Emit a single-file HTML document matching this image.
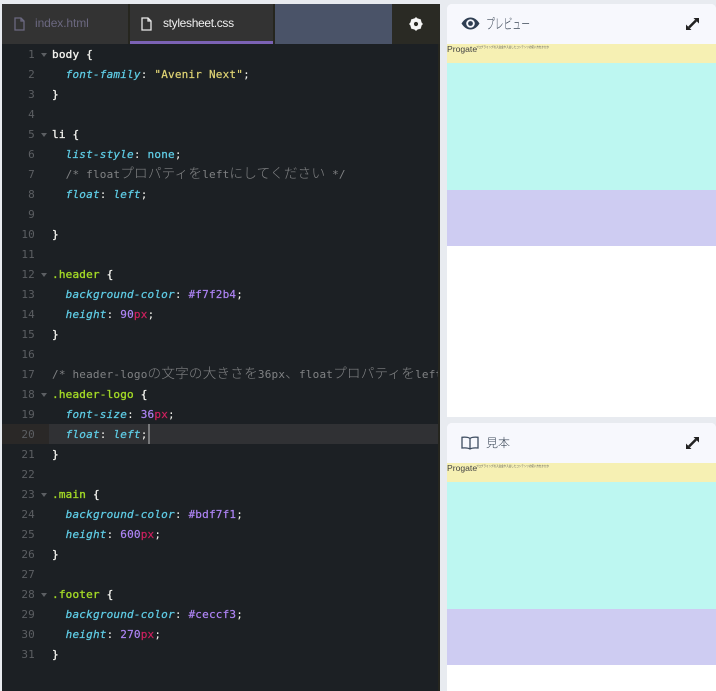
<!DOCTYPE html>
<html lang="ja"><head><meta charset="utf-8"><style>
html,body{margin:0;padding:0;width:716px;height:691px;overflow:hidden;background:#e8ebf0}
*{box-sizing:border-box}
.abs,.l,.n,.f{position:absolute}
#ed{left:2px;top:4px;width:438px;height:687px;background:#1c2024;position:absolute;overflow:hidden}
#edge{position:absolute;left:438px;top:44px;width:2px;height:647px;background:#26261f}
.tab{position:absolute;top:4px;height:40px;background:#333333;font:12px/38px "Liberation Sans",sans-serif}
#code{position:absolute;left:0;top:1px;width:438px;height:690px;overflow:hidden;font:11px/20px "DejaVu Sans Mono","Liberation Mono",monospace;color:#f4f4ef;letter-spacing:.2px}
.l{left:52px;white-space:pre;height:20px;font-weight:normal}
.n{left:2px;width:33px;text-align:right;color:#5c5f63;height:20px;font-weight:normal}
.f{left:41px;width:0;height:0;margin-top:-1px;border-left:3px solid transparent;border-right:3px solid transparent;border-top:4px solid #5c5f63}
.s{font-weight:normal;color:#f2f2ee;-webkit-text-stroke:.35px #f2f2ee}
.p{font-style:italic;color:#5fcde6;-webkit-text-stroke:.25px #5fcde6}
.v{color:#5fcde6;-webkit-text-stroke:.25px #5fcde6}
.q{color:#e0d474;-webkit-text-stroke:.2px #e0d474}
.c{color:#808284}
.g{color:#a3d926;-webkit-text-stroke:.35px #a3d926}
.h{color:#ae84f5;-webkit-text-stroke:.2px #ae84f5}
.x{color:#d0205f;-webkit-text-stroke:.2px #d0205f}
.j{font-family:"Noto Sans CJK JP",sans-serif;font-size:13.6px;font-weight:300;line-height:0}
.panel{position:absolute;left:447px;width:269px;background:#fff;overflow:hidden;border-radius:5px 5px 0 0}
.hd{position:absolute;left:0;top:0;width:269px;height:40px;background:#f7f8fd;color:#3a4656;font:12px/40px "Noto Sans CJK JP",sans-serif}
.y,.t,.u{position:absolute;left:0;width:269px}
.y{top:40px;height:19px;background:#f6f0b3;color:#444;overflow:hidden}
.t{top:59px;height:127px;background:#bdf7f1}
.u{top:186px;height:56px;background:#ceccf2}
.pg{position:absolute;left:0;top:0;font:8.6px/11px "Liberation Sans",sans-serif}
</style></head><body>
<div id="ed"></div>
<div class="tab" style="left:2px;width:126px;color:#6b6880"><span style="position:absolute;left:33px;letter-spacing:-.1px">index.html</span>
<svg style="position:absolute;left:11px;top:13px" width="13" height="14" viewBox="0 0 13 14" fill="none" stroke="#6b6880" stroke-width="1.3"><path d="M2 1h6l3 3v9H2zM8 1v3h3"/></svg></div>
<div class="tab" style="left:128px;width:2px;background:#26261f"></div>
<div class="tab" style="left:130px;width:143px;color:#f0f0f0;"><span style="position:absolute;left:33px;letter-spacing:-.33px">stylesheet.css</span>
<svg style="position:absolute;left:10px;top:13px" width="13" height="14" viewBox="0 0 13 14" fill="none" stroke="#e8e8e8" stroke-width="1.3"><path d="M2 1h6l3 3v9H2zM8 1v3h3"/></svg>
<div style="position:absolute;left:0;top:37px;width:143px;height:3px;background:#7b62b5"></div></div>
<div class="tab" style="left:273px;width:2px;background:#26261f"></div>
<div class="tab" style="left:275px;width:117px;background:#4a5368"></div>
<div class="tab" style="left:392px;width:48px;background:#2a2a24">
<svg style="position:absolute;left:17px;top:13px" width="14" height="14" viewBox="0 0 14 14"><circle cx="7" cy="7" r="4.4" fill="none" stroke="#f5f5f5" stroke-width="3"/><path d="M7 7V.5M7 7v6.500M7 7H.5M7 7h6.500M7 7 2.400 2.400M7 7l4.600 4.600M7 7l4.600-4.600M7 7l-4.600 4.600" stroke="#f5f5f5" stroke-width="2"/><circle cx="7" cy="7" r="2.100" fill="#2a2a24"/></svg></div>
<div id="edge"></div>
<div class="abs" style="left:2px;top:424px;width:47px;height:20px;background:#2a2827"></div>
<div class="abs" style="left:49px;top:424px;width:389px;height:20px;background:#303134"></div>
<div class="abs" style="left:148px;top:424px;width:2px;height:20px;background:#77787a"></div>
<div id="code">
<div class="n" style="top:44px">1</div><div class="f" style="top:53px"></div><div class="l" style="top:44px"><span class="s">body {</span></div>
<div class="n" style="top:64px">2</div><div class="l" style="top:64px">  <span class="p">font-family</span>: <span class="q">"Avenir Next"</span>;</div>
<div class="n" style="top:84px">3</div><div class="l" style="top:84px"><span class="s">}</span></div>
<div class="n" style="top:104px">4</div>
<div class="n" style="top:124px">5</div><div class="f" style="top:133px"></div><div class="l" style="top:124px"><span class="s">li {</span></div>
<div class="n" style="top:144px">6</div><div class="l" style="top:144px">  <span class="p">list-style</span>: <span class="v">none</span>;</div>
<div class="n" style="top:164px">7</div><div class="l" style="top:164px">  <span class="c">/* float<span class="j">プロパティを</span>left<span class="j">にしてください</span> */</span></div>
<div class="n" style="top:184px">8</div><div class="l" style="top:184px">  <span class="p">float</span>: <span class="p">left</span>;</div>
<div class="n" style="top:204px">9</div>
<div class="n" style="top:224px">10</div><div class="l" style="top:224px"><span class="s">}</span></div>
<div class="n" style="top:244px">11</div>
<div class="n" style="top:264px">12</div><div class="f" style="top:273px"></div><div class="l" style="top:264px"><span class="g">.header</span> <span class="s">{</span></div>
<div class="n" style="top:284px">13</div><div class="l" style="top:284px">  <span class="p">background-color</span>: <span class="h">#f7f2b4</span>;</div>
<div class="n" style="top:304px">14</div><div class="l" style="top:304px">  <span class="p">height</span>: <span class="h">90</span><span class="x">px</span>;</div>
<div class="n" style="top:324px">15</div><div class="l" style="top:324px"><span class="s">}</span></div>
<div class="n" style="top:344px">16</div>
<div class="n" style="top:364px">17</div><div class="l" style="top:364px"><span class="c">/* header-logo<span class="j">の文字の大きさを</span>36px<span class="j">、</span>float<span class="j">プロパティを</span>left</span></div>
<div class="n" style="top:384px">18</div><div class="f" style="top:393px"></div><div class="l" style="top:384px"><span class="g">.header-logo</span> <span class="s">{</span></div>
<div class="n" style="top:404px">19</div><div class="l" style="top:404px">  <span class="p">font-size</span>: <span class="h">36</span><span class="x">px</span>;</div>
<div class="n" style="top:424px">20</div><div class="l" style="top:424px">  <span class="p">float</span>: <span class="p">left</span>;</div>
<div class="n" style="top:444px">21</div><div class="l" style="top:444px"><span class="s">}</span></div>
<div class="n" style="top:464px">22</div>
<div class="n" style="top:484px">23</div><div class="f" style="top:493px"></div><div class="l" style="top:484px"><span class="g">.main</span> <span class="s">{</span></div>
<div class="n" style="top:504px">24</div><div class="l" style="top:504px">  <span class="p">background-color</span>: <span class="h">#bdf7f1</span>;</div>
<div class="n" style="top:524px">25</div><div class="l" style="top:524px">  <span class="p">height</span>: <span class="h">600</span><span class="x">px</span>;</div>
<div class="n" style="top:544px">26</div><div class="l" style="top:544px"><span class="s">}</span></div>
<div class="n" style="top:564px">27</div>
<div class="n" style="top:584px">28</div><div class="f" style="top:593px"></div><div class="l" style="top:584px"><span class="g">.footer</span> <span class="s">{</span></div>
<div class="n" style="top:604px">29</div><div class="l" style="top:604px">  <span class="p">background-color</span>: <span class="h">#ceccf3</span>;</div>
<div class="n" style="top:624px">30</div><div class="l" style="top:624px">  <span class="p">height</span>: <span class="h">270</span><span class="x">px</span>;</div>
<div class="n" style="top:644px">31</div><div class="l" style="top:644px"><span class="s">}</span></div>
</div>
<div class="panel" style="top:4px;height:413px">
<div class="hd">
<svg style="position:absolute;left:38px;top:10px" width="50" height="20"><text x="1" y="15" font-size="14" font-weight="300" fill="#3a4656" font-family="'Noto Sans CJK JP',sans-serif" textLength="44" lengthAdjust="spacingAndGlyphs">プレビュー</text></svg>
<svg style="position:absolute;left:14px;top:13px" width="19" height="13" viewBox="0 0 19 13"><path fill-rule="evenodd" fill="#2f3e52" d="M.5 6.500C3 2.500 6 .5 9.500.5s6.500 2 9 6c-2.500 4-5.500 6-9 6s-6.500-2-9-6zM9.500 2.200a4.300 4.300 0 1 0 0 8.600 4.300 4.300 0 0 0 0-8.600z"/><circle cx="9.500" cy="6.500" r="2.400" fill="#2f3e52"/></svg>
<svg style="position:absolute;left:239px;top:13px" width="13" height="14" viewBox="0 0 13 14"><path fill="#222" d="M7.500 1H13V6.500zM5.500 13H0V7.500z"/><path stroke="#222" stroke-width="2.600" d="M3 10.500l7-7"/></svg></div>
<div class="y"><span class="pg">Progate</span><svg style="position:absolute;left:29px;top:0" width="76" height="8"><text x="0" y="4" font-size="3" fill="#555" font-family="'Noto Sans CJK JP',sans-serif" textLength="73" lengthAdjust="spacingAndGlyphs">プログラミングの入会金や入会したコンテンツの使い方をかかか</text></svg></div><div class="t"></div><div class="u"></div>
</div>
<div class="panel" style="top:423px;height:268px">
<div class="hd"><span style="position:absolute;left:39px;top:0;font-weight:300">見本</span>
<svg style="position:absolute;left:14px;top:13px" width="18" height="15" viewBox="0 0 18 15" fill="none" stroke="#3d4c60" stroke-width="1.300"><path d="M9 2.500C7.500 1.300 4 1 1 1.300v10.700c3-.3 6.500 0 8 1 1.500-1 5-1.300 8-1V1.300C14 1 10.500 1.300 9 2.500zM9 2.500V13"/></svg>
<svg style="position:absolute;left:239px;top:13px" width="13" height="14" viewBox="0 0 13 14"><path fill="#222" d="M7.500 1H13V6.500zM5.500 13H0V7.500z"/><path stroke="#222" stroke-width="2.600" d="M3 10.500l7-7"/></svg></div>
<div class="y"><span class="pg">Progate</span><svg style="position:absolute;left:29px;top:0" width="76" height="8"><text x="0" y="4" font-size="3" fill="#555" font-family="'Noto Sans CJK JP',sans-serif" textLength="73" lengthAdjust="spacingAndGlyphs">プログラミングの入会金や入会したコンテンツの使い方をかかか</text></svg></div><div class="t"></div><div class="u"></div>
</div>
</body></html>
